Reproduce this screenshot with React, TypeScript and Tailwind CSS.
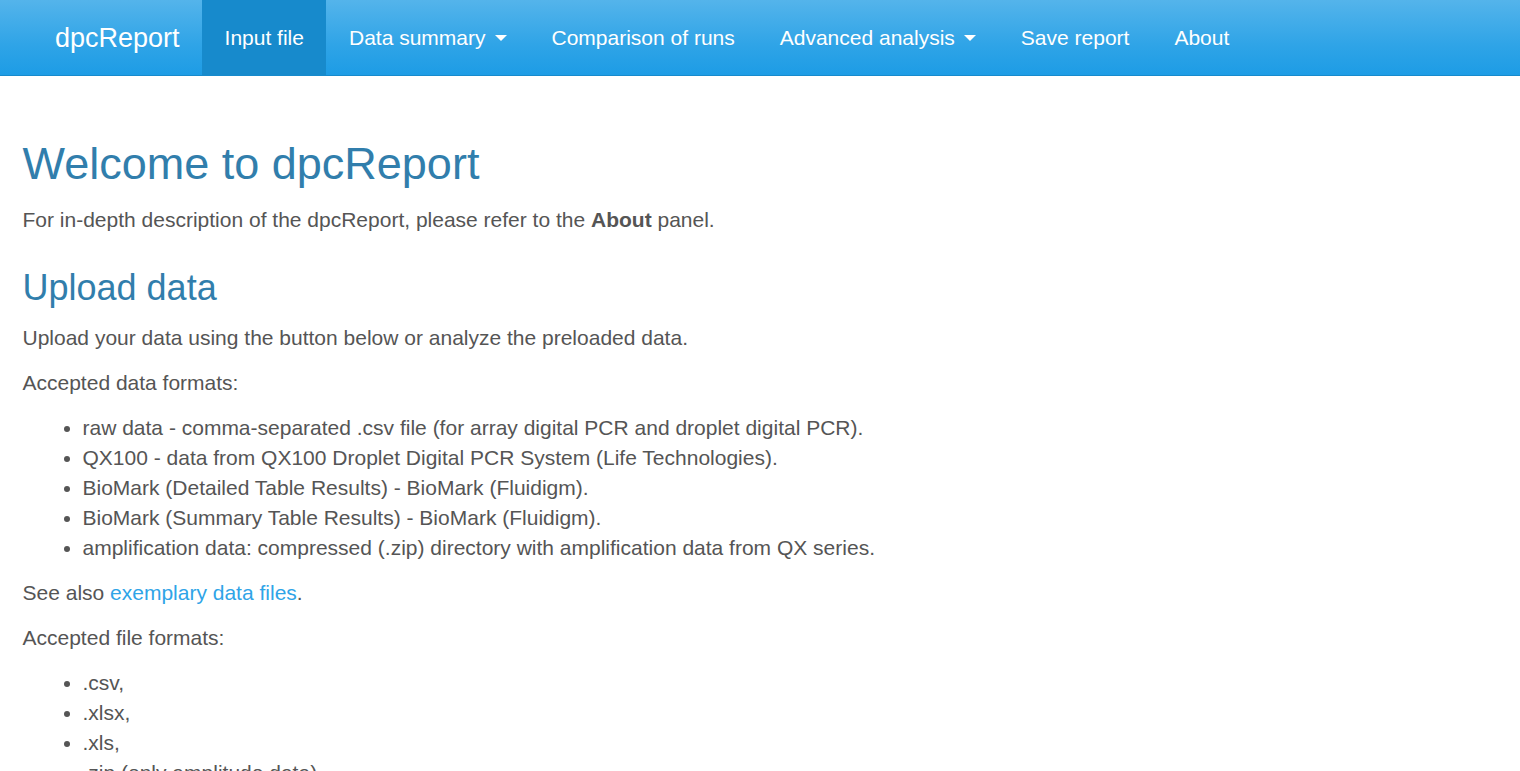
import React from "react";

const navItems = [
  { label: "Input file", active: true },
  { label: "Data summary", caret: true },
  { label: "Comparison of runs" },
  { label: "Advanced analysis", caret: true },
  { label: "Save report" },
  { label: "About" },
];

const dataFormats = [
  "raw data - comma-separated .csv file (for array digital PCR and droplet digital PCR).",
  "QX100 - data from QX100 Droplet Digital PCR System (Life Technologies).",
  "BioMark (Detailed Table Results) - BioMark (Fluidigm).",
  "BioMark (Summary Table Results) - BioMark (Fluidigm).",
  "amplification data: compressed (.zip) directory with amplification data from QX series.",
];

const fileFormats = [".csv,", ".xlsx,", ".xls,", ".zip (only amplitude data)."];

const Caret = () => (
  <span className="ml-[9px] inline-block h-0 w-0 border-x-[6px] border-t-[6px] border-x-transparent border-t-white align-middle" />
);

export default function App() {
  return (
    <div className="min-h-screen bg-white font-['Liberation_Sans',Arial,sans-serif] text-[21px] leading-[30px] text-[#555555]">
      {/* Navbar */}
      <nav className="flex h-[76px] border-b border-[#178acc] bg-[linear-gradient(#54b4eb,#2fa4e7_60%,#1d9ce5)] pl-[32.5px] text-white [text-shadow:0_1px_0_rgba(0,0,0,0.05)]">
        <span className="px-[22.5px] pt-[22.5px] text-[27px] leading-[30px]">dpcReport</span>
        <ul className="flex">
          {navItems.map((item) => (
            <li
              key={item.label}
              className={`flex h-[75px] items-start px-[22.5px] pt-[22.5px] ${item.active ? "bg-[#178acc]" : ""}`}
            >
              <span className="flex items-center">
                {item.label}
                {item.caret && <Caret />}
              </span>
            </li>
          ))}
        </ul>
      </nav>

      {/* Content */}
      <div className="px-[22.5px] pt-[33px]">
        <h2 className="mt-[30px] mb-[16px] text-[45px] leading-[49.5px] text-[#317eac]">Welcome to dpcReport</h2>
        <p className="mb-[15px]">
          For in-depth description of the dpcReport, please refer to the <b>About</b> panel.
        </p>

        <h3 className="mt-[33px] mb-[16px] text-[36px] leading-[39.6px] text-[#317eac]">Upload data</h3>
        <p className="mb-[15px]">Upload your data using the button below or analyze the preloaded data.</p>
        <p className="mb-[15px]">Accepted data formats:</p>
        <ul className="mb-[15px] list-disc pl-[60px]">
          {dataFormats.map((f) => (
            <li key={f}>{f}</li>
          ))}
        </ul>
        <p className="mb-[15px]">
          See also <a className="text-[#2fa4e7]">exemplary data files</a>.
        </p>
        <p className="mb-[15px]">Accepted file formats:</p>
        <ul className="mb-[15px] list-disc pl-[60px]">
          {fileFormats.map((f) => (
            <li key={f}>{f}</li>
          ))}
        </ul>
      </div>
    </div>
  );
}
